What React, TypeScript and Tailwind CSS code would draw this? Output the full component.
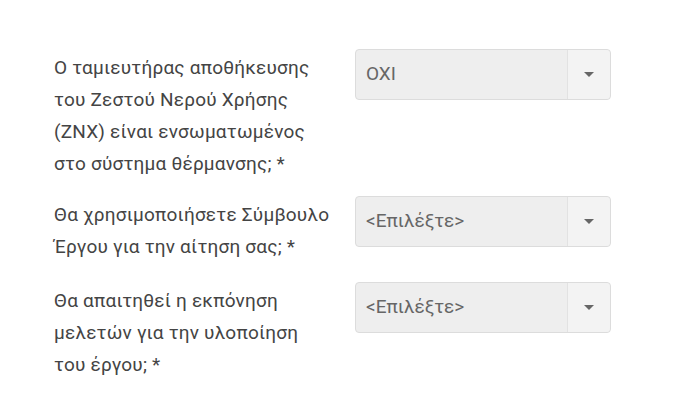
const rows = [
  {
    lines: [
      "Ο ταμιευτήρας αποθήκευσης",
      "του Ζεστού Νερού Χρήσης",
      "(ZNX) είναι ενσωματωμένος",
      "στο σύστημα θέρμανσης; *",
    ],
    value: "OXI",
    mt: "mt-0",
  },
  {
    lines: ["Θα χρησιμοποιήσετε Σύμβουλο", "Έργου για την αίτηση σας; *"],
    value: "<Επιλέξτε>",
    mt: "mt-[16px]",
  },
  {
    lines: ["Θα απαιτηθεί η εκπόνηση", "μελετών για την υλοποίηση", "του έργου; *"],
    value: "<Επιλέξτε>",
    mt: "mt-[19px]",
  },
];

const SelectBox = ({ value }: { value: string }) => (
  <div className="flex h-[51px] w-[256px] items-stretch rounded-[4px] border border-[#dcdcdc] bg-[#eeeeee]">
    <div className="flex flex-1 items-center pl-[10px] text-[19px] text-[#666666]">{value}</div>
    <div className="flex w-[43px] items-center justify-center rounded-r-[4px] border-l border-[#e2e2e2] bg-[#f3f3f3]">
      <div className="h-0 w-0 border-x-[5px] border-t-[5px] border-x-transparent border-t-[#666666]" />
    </div>
  </div>
);

export default function App() {
  return (
    <div className="min-h-[401px] w-[676px] bg-white pl-[54px] pt-[49px] font-['Roboto',sans-serif]">
      {rows.map((r) => (
        <div key={r.value + r.mt} className={`flex items-start ${r.mt}`}>
          <p className="mt-[3px] w-[286px] text-[19px] leading-[32px] tracking-[0.2px] text-[#444444]">
            {r.lines.map((l) => (
              <span key={l} className="block whitespace-nowrap">
                {l}
              </span>
            ))}
          </p>
          <div className="ml-[15px]">
            <SelectBox value={r.value} />
          </div>
        </div>
      ))}
    </div>
  );
}
